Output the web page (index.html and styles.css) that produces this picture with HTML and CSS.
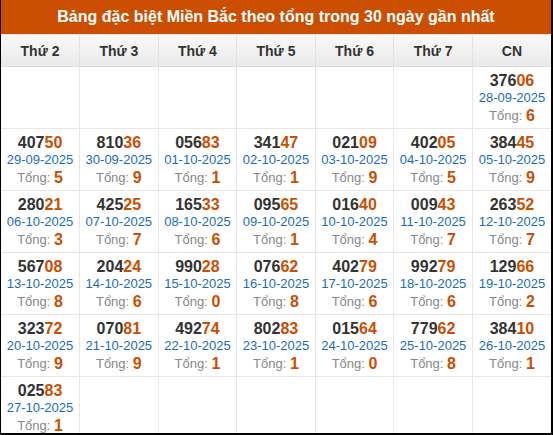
FILE: index.html
```html
<!DOCTYPE html>
<html lang="vi">
<head>
<meta charset="utf-8">
<link rel="stylesheet" href="styles.css">
</head>
<body>
<div class="frame">
  <div class="title">Bảng đặc biệt Miền Bắc theo tổng trong 30 ngày gần nhất</div>
  <table class="cal">
    <thead>
      <tr><th>Thứ 2</th><th>Thứ 3</th><th>Thứ 4</th><th>Thứ 5</th><th>Thứ 6</th><th>Thứ 7</th><th>CN</th></tr>
    </thead>
    <tbody>
      <tr>
        <td></td><td></td><td></td><td></td><td></td><td></td>
        <td><div class="num">376<b>06</b></div><div class="date">28-09-2025</div><div class="sum">Tổng: <b>6</b></div></td>
      </tr>
      <tr>
        <td><div class="num">407<b>50</b></div><div class="date">29-09-2025</div><div class="sum">Tổng: <b>5</b></div></td>
        <td><div class="num">810<b>36</b></div><div class="date">30-09-2025</div><div class="sum">Tổng: <b>9</b></div></td>
        <td><div class="num">056<b>83</b></div><div class="date">01-10-2025</div><div class="sum">Tổng: <b>1</b></div></td>
        <td><div class="num">341<b>47</b></div><div class="date">02-10-2025</div><div class="sum">Tổng: <b>1</b></div></td>
        <td><div class="num">021<b>09</b></div><div class="date">03-10-2025</div><div class="sum">Tổng: <b>9</b></div></td>
        <td><div class="num">402<b>05</b></div><div class="date">04-10-2025</div><div class="sum">Tổng: <b>5</b></div></td>
        <td><div class="num">384<b>45</b></div><div class="date">05-10-2025</div><div class="sum">Tổng: <b>9</b></div></td>
      </tr>
      <tr>
        <td><div class="num">280<b>21</b></div><div class="date">06-10-2025</div><div class="sum">Tổng: <b>3</b></div></td>
        <td><div class="num">425<b>25</b></div><div class="date">07-10-2025</div><div class="sum">Tổng: <b>7</b></div></td>
        <td><div class="num">165<b>33</b></div><div class="date">08-10-2025</div><div class="sum">Tổng: <b>6</b></div></td>
        <td><div class="num">095<b>65</b></div><div class="date">09-10-2025</div><div class="sum">Tổng: <b>1</b></div></td>
        <td><div class="num">016<b>40</b></div><div class="date">10-10-2025</div><div class="sum">Tổng: <b>4</b></div></td>
        <td><div class="num">009<b>43</b></div><div class="date">11-10-2025</div><div class="sum">Tổng: <b>7</b></div></td>
        <td><div class="num">263<b>52</b></div><div class="date">12-10-2025</div><div class="sum">Tổng: <b>7</b></div></td>
      </tr>
      <tr>
        <td><div class="num">567<b>08</b></div><div class="date">13-10-2025</div><div class="sum">Tổng: <b>8</b></div></td>
        <td><div class="num">204<b>24</b></div><div class="date">14-10-2025</div><div class="sum">Tổng: <b>6</b></div></td>
        <td><div class="num">990<b>28</b></div><div class="date">15-10-2025</div><div class="sum">Tổng: <b>0</b></div></td>
        <td><div class="num">076<b>62</b></div><div class="date">16-10-2025</div><div class="sum">Tổng: <b>8</b></div></td>
        <td><div class="num">402<b>79</b></div><div class="date">17-10-2025</div><div class="sum">Tổng: <b>6</b></div></td>
        <td><div class="num">992<b>79</b></div><div class="date">18-10-2025</div><div class="sum">Tổng: <b>6</b></div></td>
        <td><div class="num">129<b>66</b></div><div class="date">19-10-2025</div><div class="sum">Tổng: <b>2</b></div></td>
      </tr>
      <tr>
        <td><div class="num">323<b>72</b></div><div class="date">20-10-2025</div><div class="sum">Tổng: <b>9</b></div></td>
        <td><div class="num">070<b>81</b></div><div class="date">21-10-2025</div><div class="sum">Tổng: <b>9</b></div></td>
        <td><div class="num">492<b>74</b></div><div class="date">22-10-2025</div><div class="sum">Tổng: <b>1</b></div></td>
        <td><div class="num">802<b>83</b></div><div class="date">23-10-2025</div><div class="sum">Tổng: <b>1</b></div></td>
        <td><div class="num">015<b>64</b></div><div class="date">24-10-2025</div><div class="sum">Tổng: <b>0</b></div></td>
        <td><div class="num">779<b>62</b></div><div class="date">25-10-2025</div><div class="sum">Tổng: <b>8</b></div></td>
        <td><div class="num">384<b>10</b></div><div class="date">26-10-2025</div><div class="sum">Tổng: <b>1</b></div></td>
      </tr>
      <tr>
        <td><div class="num">025<b>83</b></div><div class="date">27-10-2025</div><div class="sum">Tổng: <b>1</b></div></td>
        <td></td><td></td><td></td><td></td><td></td><td></td>
      </tr>
    </tbody>
  </table>
</div>
</body>
</html>
```
FILE: styles.css
```css
html, body {
  margin: 0;
  padding: 0;
  background: #fff;
}
body {
  font-family: "Liberation Sans", Arial, sans-serif;
}
.frame {
  width: 550px;
  height: 433px;
  border-left: 1px solid #000;
  border-right: 2px solid #000;
  border-bottom: 2px solid #000;
  overflow: hidden;
}
.title {
  height: 34px;
  line-height: 33px;
  background: #cc4e00;
  color: #fff;
  font-weight: bold;
  font-size: 16px;
  text-align: center;
  border-bottom: 1px solid #f4e6dc;
}
.cal {
  width: 100%;
  border-collapse: collapse;
  table-layout: fixed;
}
.cal th {
  height: 31px;
  padding: 0;
  background: linear-gradient(#f9f9f9, #e9e9e9);
  color: #333;
  font-size: 14px;
  font-weight: bold;
  border-left: 1px solid #e2e2e2;
  border-bottom: 1px solid #dcdcdc;
}
.cal th:first-child, .cal td:first-child {
  border-left: 0;
}
.cal td {
  height: 61px;
  padding: 0;
  text-align: center;
  vertical-align: top;
  border-left: 1px solid #e6e6e6;
  border-bottom: 1px solid #e6e6e6;
}
.num {
  margin-top: 5px;
  font-size: 16px;
  font-weight: bold;
  color: #333;
  line-height: 17px;
}
.num b, .sum b {
  color: #cc4e00;
}
.date {
  font-size: 13px;
  color: #1a6cbc;
  line-height: 17px;
}
.sum {
  font-size: 13px;
  color: #888;
  line-height: 19px;
}
.sum b {
  font-size: 16px;
  vertical-align: -1px;
}
```
